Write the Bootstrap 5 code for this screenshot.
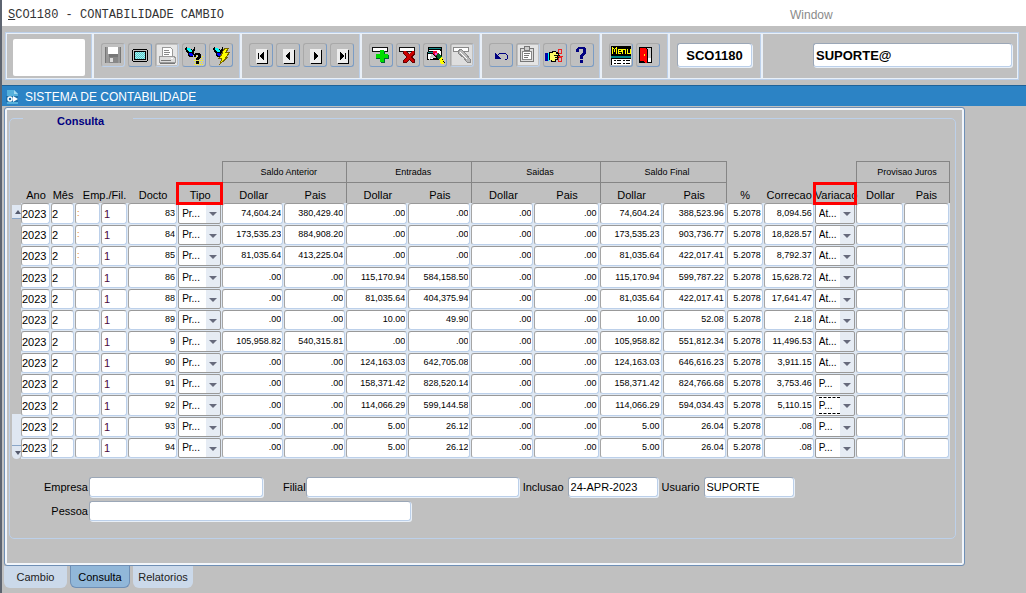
<!DOCTYPE html>
<html lang="pt-BR">
<head>
<meta charset="utf-8">
<meta name="viewport" content="width=device-width, initial-scale=1">
<title>SCO1180 - Contabilidade Cambio</title>
<link href="https://cdn.jsdelivr.net/npm/bootstrap@5.3.0/dist/css/bootstrap.min.css" rel="stylesheet">
<style>
:root { --face:#c0c0c0; --sky:#bcd0ea; --pale:#e9f0f8; --steel:#6f8fb5; }
body { background:var(--face); color:#000; font:11px/14px "Liberation Sans", Arial, sans-serif; min-height:100vh; border-left:2px solid #5d6470; }
.menu-strip { height:26px; background:#fff; padding:3px 0 0 6px; line-height:24px; }
.menu-name { font:12px/24px "Liberation Mono", monospace; color:#333; flex:0 0 782px; }
.menu-item { font-size:12px; color:#8a8a8a; text-decoration:none; }
.toolframe { margin:6px 7px 5px 3px; border:2px solid var(--pale); outline:1px solid var(--sky); outline-offset:-1px; height:48px; }
.seg { border-left:2px solid var(--pale); box-shadow:inset -1px 0 var(--sky); padding:9px 0 0 7px; display:flex; gap:3px; align-items:flex-start; flex:none; }
.seg:last-child { box-shadow:none; }
.w-logo { border:0; width:85px; padding:5px 0 0 6px; }
.logo-box { width:72px; height:37px; background:#fff; border-radius:2px; }
.w-five { width:148px; } .w-four { width:120px; } .w-two { width:68px; } .w-code { width:93px; }
.tool { width:24px; height:24px; padding:0; border:1px solid; border-color:#a9a9a9 #7b9cc4 #7b9cc4 #a9a9a9; border-radius:3px; background:var(--face); display:block; }
.tool svg { display:block; width:22px; height:22px; shape-rendering:crispEdges; }
.tool:disabled { border-color:#a9a9a9 var(--sky) var(--sky) #a9a9a9; }
.field { height:20px; padding:0 2px; border:1px solid; border-color:#9ba7b7 var(--sky) var(--sky) #9ba7b7; border-radius:3px; box-shadow:1px 1px var(--pale); background:#fff; font-size:11px; line-height:16px; min-width:0; color:#000; }
.field-top { height:24px; font-size:13px; font-weight:700; }
.caption { height:21px; background:#2c83c5; border-top:1px solid #1f6298; color:#fff; font-size:12px; line-height:22px; padding-left:4px; gap:6px; }
.panel { margin:1px 61px 0 2px; border:1px solid var(--steel); border-radius:3px; box-shadow:inset 0 0 0 2px #f2f6fb; padding:0 8px 26px 4px; }
fieldset.group { border:1px solid var(--sky); border-radius:5px; padding:0 5px 17px 2px; }
.group legend { float:none; width:110px; margin:0 0 33px 11px; padding:6px 0 0 34px; font-size:11px; line-height:14px; font-weight:700; color:#000080; }
.scroller { width:9px; flex:none; padding-top:44px; }
.scroller button, .scroller span { display:block; width:9px; border:0; padding:0; background:#dfe7f2; }
.scroller button { height:14px; }
.scroller svg { display:block; width:9px; height:14px; }
.grid-data { width:100%; table-layout:fixed; border-collapse:separate; border-spacing:0; }
.grid-data th { font-weight:400; text-align:center; padding:0; white-space:nowrap; overflow:visible; }
.grid-data thead tr:first-child th { height:22px; font-size:9px; }
.grid-data thead tr:first-child th.box { padding-left:8px; }
.grid-data thead tr:last-child th { height:20px; padding-top:3px; }
.grid-data thead tr:last-child th.pair { padding-left:6px; }
th.box { border:1px solid #858585; border-right-width:0; }
th.edge-l { border-left:1px solid #858585; } th.edge-r, th.box-end { border-right:1px solid #858585 !important; }
th.flag { position:relative; }
th.flag::after { content:""; position:absolute; inset:-1px -1px -2px -2px; border:3px solid #f00; }
.grid-data td { padding:0 1px 1px 0; height:21px; background:#dfe8f3; }
.grid-data tbody tr:nth-child(3n+1) td { height:22px; }
.grid-data td > * { display:block; width:100%; height:20px; border:1px solid; border-color:#999 var(--sky) var(--sky) #a5a5a5; border-radius:3px; padding:0 1px 2px; font-size:9px; line-height:16px; background:#fff; color:#000; }
.grid-data tr:nth-child(3n+1) td > * { height:21px; }
.grid-data td > input.big { font-size:11px; padding:0; }
.grid-data td > input.fil { color:#4a0840; padding-left:2px; }
.grid-data td > input.amber { color:#e08020; }
.grid-data td > input.num { text-align:right; }
.grid-data td > select { appearance:none; border-color:#999; padding:1px 14px 1px 3px; font-size:10px; line-height:16px; border-radius:2px;
  background:url("data:image/svg+xml,%3Csvg xmlns='http://www.w3.org/2000/svg' width='14' height='20'%3E%3Cpath fill='%23e6ecf4' d='M0 0h14v20H0z'/%3E%3Cpath fill='%23666a7c' d='M3 8h8L7 12z'/%3E%3C/svg%3E") right top no-repeat #fff; }
.grid-data td.current { position:relative; }
.grid-data td.current::after { content:""; position:absolute; inset:2px 16px 3px 4px; border:1px dashed #000; border-width:1px 0; pointer-events:none; }
.lines { padding:18px 0 0 0; }
.lines label { width:77px; text-align:right; padding-right:1px; }
.lines label.short { width:auto; padding:0; }
.tabs { padding-left:2px; gap:3px; }
.tabs button { height:22px; border:0; border-radius:0 0 6px 6px; background:#cbd9ea; color:#222; font-size:11px; padding:0; }
.tabs button.active { background:#91b7d9; color:#000; border:1px solid var(--steel); border-top:0; }
</style>
</head>
<body>
<header class="menu-strip d-flex">
  <span class="menu-name"><u>S</u>CO1180 - CONTABILIDADE CAMBIO</span>
  <a class="menu-item" href="#">Window</a>
</header>

<div class="toolframe d-flex" role="toolbar" aria-label="Ferramentas">
  <div class="seg w-logo"><div class="logo-box"></div></div>
  <div class="seg w-five">
    <button class="tool" disabled aria-label="Salvar"><svg viewBox="0 0 22 22"><path fill="#777" d="M3 3h15l1 1v15H3z"/><path fill="#999" d="M4 3h3v16H4zM16 3h2v16h-2z"/><path fill="#fff" d="M6 3h10v7H6z"/><path fill="#888" d="M7 13h9v6H7z"/><path fill="#ddd" d="M8 14h3v4H8z"/></svg></button>
    <button class="tool" aria-label="Tela"><svg viewBox="0 0 22 22"><path d="M4 5h14v1h1v11h-1v1H4v-1H3V6h1z"/><path fill="#c0c0c0" d="M4 6h14v11H4z"/><path d="M5 7h12v9H5z"/><path fill="#a8eef0" d="M6 8h10v7H6z"/><path stroke="#5cc" stroke-dasharray="1 1" d="M6 8.500h10M7 9.500h9M6 10.500h10M7 11.500h9M6 12.500h10M7 13.500h9M6 14.500h10"/></svg></button>
    <button class="tool" disabled aria-label="Imprimir"><svg viewBox="0 0 22 22"><path fill="#e6e6e6" d="M1 1h20v20H1z"/><path fill="#fff" stroke="#999" d="M6.500 3.500h8l2 2v7h-10z"/><path stroke="#888" d="M8 6.500h5M8 8.500h6M8 10.500h5"/><path fill="#ddd" stroke="#999" d="M3.500 12.500h15l1 2v4h-16z"/><path stroke="#777" d="M5 16.500h10M4 19.500h15"/><path fill="#fff" d="M15 14h2v1h-2z"/></svg></button>
    <button class="tool" aria-label="Entrar consulta"><svg viewBox="0 0 22 22"><path stroke="#ff0" stroke-dasharray="1 1" d="M11 12.500h9M12 14.500h8M11 16.500h9M12 18.500h8M11 20.500h9"/><path d="M3 3h1v1h2v1h3v1h1V5h1V3h1v4h-1v4h-1v2H6v-1H5V9H4V8H3V6H2V4h1z"/><path fill="#0ff" d="M4 4h2l3 3v1H6L4 6z"/><path fill="#00f" d="M6 9h2l2 2v1H7z"/><path d="M11 10h1V9h5v1h1v4h-1v1h-1v1h-3v-2h1v-1h1v-2h-2v2h-2zM13 17h3v3h-3z"/></svg></button>
    <button class="tool" aria-label="Executar consulta"><svg viewBox="0 0 22 22"><path d="M4 3h1v1h2v1h3v1h1V5h1V3h1v4h-1v4h-1v2H7v-1H6V9H5V8H4V6H3V4h1z"/><path fill="#0ff" d="M5 4h2l3 3v1H7L5 6z"/><path fill="#00f" d="M7 9h2l2 2v1H8z"/><path fill="#ff0" stroke="#776600" d="M15 4h4l-3 4h4l-4 5h2l-8 7 2-6H9l4-5h-1z"/></svg></button>
  </div>
  <div class="seg w-four">
    <button class="tool" aria-label="Primeiro"><svg viewBox="0 0 22 22"><path d="M17 6h1v14H7v-1h10z"/><path fill="#eee" d="M6 5h11v14H6z"/><path d="M8 9h1v6H8zM14 8v8h-1v-1h-1v-1h-1v-1h-1v-2h1v-1h1V9h1V8z"/></svg></button>
    <button class="tool" aria-label="Anterior"><svg viewBox="0 0 22 22"><path d="M17 6h1v14H7v-1h10z"/><path fill="#eee" d="M6 5h11v14H6z"/><path d="M13 8v8h-1v-1h-1v-1h-1v-1H9v-2h1v-1h1V9h1V8z"/></svg></button>
    <button class="tool" aria-label="Proximo"><svg viewBox="0 0 22 22"><path d="M17 6h1v14H7v-1h10z"/><path fill="#eee" d="M6 5h11v14H6z"/><path d="M10 8v8h1v-1h1v-1h1v-1h1v-2h-1v-1h-1V9h-1V8z"/></svg></button>
    <button class="tool" aria-label="Ultimo"><svg viewBox="0 0 22 22"><path d="M17 6h1v14H7v-1h10z"/><path fill="#eee" d="M6 5h11v14H6z"/><path d="M14 9h1v6h-1zM9 8v8h1v-1h1v-1h1v-1h1v-2h-1v-1h-1V9h-1V8z"/></svg></button>
  </div>
  <div class="seg w-four">
    <button class="tool" aria-label="Inserir"><svg viewBox="0 0 22 22"><path fill="#fff" stroke="#111" d="M2.500 3.500h15v4h-15z"/><path fill="#063" d="M10 7h5v4h4v4h-4v4h-4v-4H6v-4h4z"/><path fill="#0d0" d="M10 6h4v4h4v4h-4v4h-4v-4H6v-4h4z"/></svg></button>
    <button class="tool" aria-label="Excluir"><svg viewBox="0 0 22 22"><path fill="#fff" stroke="#111" d="M2.500 3.500h15v4h-15z"/><path fill="#600" d="M6 7h3l3 3 3-3h3v3l-3 3 3 3v3h-3l-3-3-3 3H6v-3l3-3-3-3z"/><path fill="#c00" d="M7 7h2l3 4 3-4h2v2l-3 4 3 4v1h-2l-3-3-3 3H7v-2l3-3-3-4z"/></svg></button>
    <button class="tool" aria-label="Limpar"><svg viewBox="0 0 22 22"><path d="M4 3h14v13H3V8h1z"/><path fill="#188" d="M5 4h12v1H5zM4 8h8v1H4z"/><path fill="#fff" d="M5 6h11v1H5zM4 10h5v5H4zM13 7h4v7h-4z"/><path fill="#ccc" d="M8 9l4 5H8l-3 2z"/><path fill="#e03" d="M9 7h4l1 3-3 2-2-2z"/><path fill="#e5e" d="M11 9h2v2h-2z"/><path fill="#062" d="M12 11l3-2 3 4-3 3z"/><path fill="#ff0" d="M15 15l3-2 2 4v3h-3z"/><path d="M18 14l3 5v1l-3-5z"/></svg></button>
    <button class="tool" disabled aria-label="Limpar registro"><svg viewBox="0 0 22 22"><path fill="#dedede" d="M1 1h20v20H1z"/><path fill="#fff" stroke="#888" d="M2.500 3.500h15v4h-15z"/><path fill="#b8b8b8" stroke="#888" d="M7 7l3-2 5 5 4 5v3h-3l-3-4-6-5z"/><path stroke="#fff" d="M9 8l7 7"/></svg></button>
  </div>
  <div class="seg w-four">
    <button class="tool" aria-label="Desfazer"><svg viewBox="0 0 22 22"><path fill="none" stroke="#000080" d="M6 13l4-4h5l2 2v4l-2 1"/><path fill="#000080" d="M5 9l6 6H5z"/></svg></button>
    <button class="tool" disabled aria-label="Area de transferencia"><svg viewBox="0 0 22 22"><path fill="#e4e4e4" d="M1 1h20v20H1z"/><path fill="#ddd" stroke="#777" d="M3.500 4.500h13v13h-13z"/><path fill="#fff" stroke="#888" d="M5.500 7.500h9v8h-9z"/><path fill="#ccc" stroke="#777" d="M7.500 2.500h5v4h-5z"/><path stroke="#777" d="M7 9.500h6M7 11.500h5M7 13.500h4"/></svg></button>
    <button class="tool" aria-label="Recortar"><svg viewBox="0 0 22 22"><path fill="#00a" d="M1 9h4v8H1z"/><path fill="#0ff" d="M4 9h1v8H4z"/><path d="M5 8h3V7h4v1h3v4h-1v4h-2v2H7v-2H5z"/><path fill="#ff6" d="M6 9h3V8h3v2h2v1h-3v1h2v1h-2v1h2v1h-2v2H8v-1H6z"/><path stroke="#111" d="M10 11.500h6M11 13.500h4"/><path fill="none" stroke="#e22" d="M14 12h5M14.500 9V5.500h3v4h-3M14.500 14v3.500h3v-4h-3"/></svg></button>
    <button class="tool" aria-label="Ajuda"><svg viewBox="0 0 22 22"><path fill="#000080" d="M5 5h1V4h1V3h7v1h1v6h-1v1h-1v1h-1v3h-3v-4h1v-1h1V9h1V5H8v3H5zM9 16h3v3H9z"/></svg></button>
  </div>
  <div class="seg w-two">
    <button class="tool" aria-label="Menu"><svg viewBox="0 0 22 22"><path d="M1 2h20v10H1z"/><path fill="none" stroke="#ff0" d="M2.500 10V3M3 4.500h1M4.500 5v3M5 4.500h1M6.500 3v7M11 9.500H8.500v-4H11v2H9M12.500 10V5M13 5.500h2M15.500 5v5M17.500 5v4.500H20V5"/><path fill="#088" d="M1 12h20v2H1z"/><path d="M1 14h20v7H1z"/><path fill="#fff" d="M2 15h19v6H2z"/><path stroke="#000" d="M4 16.500h2M7 16.500h4M13 16.500h2M16 16.500h4M4 19.500h2M7 19.500h4M13 19.500h2M16 19.500h4"/></svg></button>
    <button class="tool" aria-label="Sair"><svg viewBox="0 0 22 22"><path d="M2 3h13v16H2z"/><path fill="#ccc" d="M10 4h4v14h-4z"/><path fill="#fff" d="M10 14h4v4h-4z"/><path fill="#f00" d="M3 4h5l2 2v13H8l-2-2H3z"/><path fill="#ff0" d="M7 10h1v2H7z"/><path d="M10 5h1v14h-1z"/></svg></button>
  </div>
  <div class="seg w-code"><input class="field field-top text-center" style="width:75px" value="SCO1180" aria-label="Programa"></div>
  <div class="seg flex-fill" style="padding-left:50px;padding-right:5px"><input class="field field-top w-100" value="SUPORTE@" aria-label="Conexao"></div>
</div>

<div class="caption d-flex">
  <svg width="13" height="14" viewBox="0 0 13 14" class="mt-1"><path fill="#55b1dc" d="M1 0h7l4 4v10H1z"/><path fill="#1d6fa8" d="M0 6h12v6H0z"/><path fill="#a4daf0" d="M8 0v4h4z"/><path fill="#fff" d="M7 6l5 3-5 3z"/><circle cx="4" cy="9" r="2" fill="none" stroke="#fff" stroke-width="1.500"/></svg>
  <span>SISTEMA DE CONTABILIDADE</span>
</div>

<main>
  <section class="panel">
    <fieldset class="group">
      <legend>Consulta</legend>
      <div class="d-flex">
        <div class="scroller d-flex flex-column">
          <button aria-label="Acima"><svg viewBox="0 0 9 14"><path fill="#555b6e" d="M3 9l3-4 3 4z"/><path fill="#8aa6c8" d="M0 13h9v1H0z"/></svg></button>
          <span class="mt-auto" style="height:31px"></span>
          <button aria-label="Abaixo" class="rounded-bottom"><svg viewBox="0 0 9 14"><path fill="#555b6e" d="M3 6h6l-3 4z"/><path fill="#8aa6c8" d="M0 0h9v1H0z"/></svg></button>
        </div>
        <table class="grid-data">
          <colgroup id="cols"></colgroup>
          <thead>
            <tr><th colspan="6"></th><th colspan="2" class="box">Saldo Anterior</th><th colspan="2" class="box">Entradas</th><th colspan="2" class="box">Saidas</th><th colspan="2" class="box box-end">Saldo Final</th><th colspan="3"></th><th colspan="2" class="box box-end">Provisao Juros</th></tr>
            <tr><th>Ano</th><th>Mês</th><th colspan="2" class="pair">Emp./Fil.</th><th>Docto</th><th class="flag">Tipo</th><th class="edge-l">Dollar</th><th>Pais</th><th class="edge-l">Dollar</th><th>Pais</th><th class="edge-l">Dollar</th><th>Pais</th><th class="edge-l">Dollar</th><th class="edge-r">Pais</th><th>%</th><th>Correcao</th><th class="flag">Variacao</th><th class="edge-l">Dollar</th><th class="edge-r">Pais</th></tr>
          </thead>
          <tbody id="rows"></tbody>
        </table>
      </div>
      <div class="lines">
        <div class="d-flex align-items-center mb-1">
          <label for="empresa">Empresa</label><input id="empresa" class="field" style="width:174px">
          <label for="filial" class="short ms-3 ps-1">Filial</label><input id="filial" class="field" style="width:213px">
          <label for="inclusao" class="short ms-1">Inclusao</label><input id="inclusao" class="field ms-1" style="width:90px" value="24-APR-2023">
          <label for="usuario" class="short ms-1">Usuario</label><input id="usuario" class="field ms-1" style="width:90px" value="SUPORTE">
        </div>
        <div class="d-flex align-items-center">
          <label for="pessoa">Pessoa</label><input id="pessoa" class="field" style="width:322px">
        </div>
      </div>
    </fieldset>
  </section>
  <nav class="tabs d-flex" aria-label="Paginas">
    <button style="width:63px">Cambio</button><button class="active" style="width:60px">Consulta</button><button style="width:60px">Relatorios</button>
  </nav>
</main>

<script>
const widths = [30,24,26,27,50,44,62,62,62,63,63,65,63,64,37,51,41,48,46];
document.getElementById('cols').innerHTML = widths.map(w => `<col style="width:${w / 9.28}%">`).join('');
// docto, saldo anterior, entradas, saldo final, correcao, variacao
const data = [
  ['83','74,604.24','380,429.40','.00','.00','74,604.24','388,523.96','8,094.56','At...'],
  ['84','173,535.23','884,908.20','.00','.00','173,535.23','903,736.77','18,828.57','At...'],
  ['85','81,035.64','413,225.04','.00','.00','81,035.64','422,017.41','8,792.37','At...'],
  ['86','.00','.00','115,170.94','584,158.50','115,170.94','599,787.22','15,628.72','At...'],
  ['88','.00','.00','81,035.64','404,375.94','81,035.64','422,017.41','17,641.47','At...'],
  ['89','.00','.00','10.00','49.90','10.00','52.08','2.18','At...'],
  ['9','105,958.82','540,315.81','.00','.00','105,958.82','551,812.34','11,496.53','At...'],
  ['90','.00','.00','124,163.03','642,705.08','124,163.03','646,616.23','3,911.15','At...'],
  ['91','.00','.00','158,371.42','828,520.14','158,371.42','824,766.68','3,753.46','P...'],
  ['92','.00','.00','114,066.29','599,144.58','114,066.29','594,034.43','5,110.15','P...'],
  ['93','.00','.00','5.00','26.12','5.00','26.04','.08','P...'],
  ['94','.00','.00','5.00','26.12','5.00','26.04','.08','P...']
];
const box = (v, c, n) => `<td><input class="${c}" value="${v}" aria-label="${n}"></td>`;
const pick = (v, n, c = '') => `<td class="${c}"><select aria-label="${n}"><option>${v}</option></select></td>`;
document.getElementById('rows').innerHTML = data.map((d, i) => '<tr>' +
  box('2023','big','Ano') + box('2','big','Mes') + box(i < 3 ? ':' : '','amber','Empresa') + box('1','big fil','Filial') +
  box(d[0],'num','Docto') + pick('Pr...','Tipo') +
  box(d[1],'num','Saldo anterior dollar') + box(d[2],'num','Saldo anterior pais') +
  box(d[3],'num','Entradas dollar') + box(d[4],'num','Entradas pais') +
  box('.00','num','Saidas dollar') + box('.00','num','Saidas pais') +
  box(d[5],'num','Saldo final dollar') + box(d[6],'num','Saldo final pais') +
  box('5.2078','num','Percentual') + box(d[7],'num','Correcao') + pick(d[8],'Variacao', d[0] === '92' ? 'current' : '') +
  box('','num','Provisao dollar') + box('','num','Provisao pais') + '</tr>').join('');
</script>
<script src="https://cdn.jsdelivr.net/npm/bootstrap@5.3.0/dist/js/bootstrap.bundle.min.js"></script>
</body>
</html>
